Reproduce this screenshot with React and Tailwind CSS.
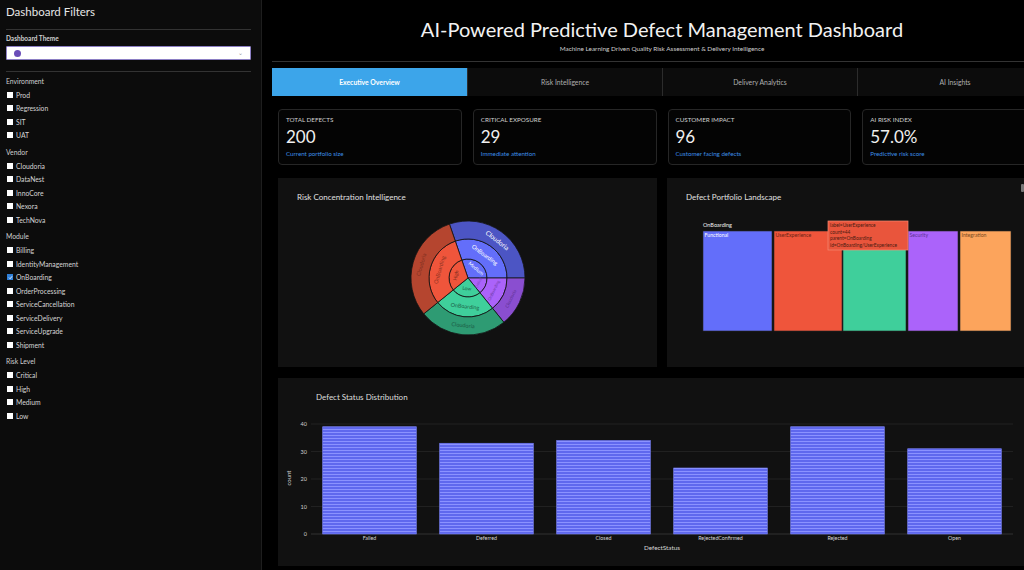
import React from 'react';

const FONT = { fontFamily: 'Lato, "Open Sans", sans-serif' };

const filterGroups = [
  { title: 'Environment', items: ['Prod', 'Regression', 'SIT', 'UAT'] },
  { title: 'Vendor', items: ['Cloudoria', 'DataNest', 'InnoCore', 'Nexora', 'TechNova'] },
  {
    title: 'Module',
    items: [
      'Billing',
      'IdentityManagement',
      'OnBoarding',
      'OrderProcessing',
      'ServiceCancellation',
      'ServiceDelivery',
      'ServiceUpgrade',
      'Shipment',
    ],
  },
  { title: 'Risk Level', items: ['Critical', 'High', 'Medium', 'Low'] },
];

const checked = ['OnBoarding'];

const tabs = ['Executive Overview', 'Risk Intelligence', 'Delivery Analytics', 'AI Insights'];

const kpis = [
  { label: 'TOTAL DEFECTS', value: '200', note: 'Current portfolio size' },
  { label: 'CRITICAL EXPOSURE', value: '29', note: 'Immediate attention' },
  { label: 'CUSTOMER IMPACT', value: '96', note: 'Customer facing defects' },
  { label: 'AI RISK INDEX', value: '57.0%', note: 'Predictive risk score' },
];

const statusCounts = [
  { status: 'Failed', count: 39 },
  { status: 'Deferred', count: 33 },
  { status: 'Closed', count: 34 },
  { status: 'RejectedConfirmed', count: 24 },
  { status: 'Rejected', count: 39 },
  { status: 'Open', count: 31 },
];

function Checkbox({ on }) {
  if (on) {
    return (
      <span className="w-[6px] h-[6px] bg-[#2f7fd8] flex items-center justify-center">
        <svg width="5" height="5" viewBox="0 0 10 10">
          <path d="M2 5.2 L4.2 7.4 L8.2 2.6" stroke="#fff" strokeWidth="1.8" fill="none" />
        </svg>
      </span>
    );
  }
  return <span className="w-[6px] h-[6px] bg-white" />;
}

function Sidebar() {
  return (
    <aside className="w-[262px] h-[570px] shrink-0 bg-[#0c0c0c] border-r border-[#1e1e1e] px-[6px] text-[#d2d2d2]">
      <div className="h-[24px] flex items-center text-[11.5px] text-[#e6e6e6]">Dashboard Filters</div>
      <div className="mt-[5px] border-t border-[#333] w-[245px]" />
      <div className="mt-[4px] h-[10px] flex items-center text-[6.5px] font-bold text-[#cfcfcf]">Dashboard Theme</div>
      <div className="mt-[2px] w-[245px] h-[14px] bg-white border border-[#8c7fc4] rounded-[1px] flex items-center justify-between px-[7px]">
        <span className="w-[7px] h-[7px] rounded-full bg-[#6a4db8]" />
        <span className="text-[6px] text-[#999] leading-none">⌄</span>
      </div>
      <div className="mt-[11px] border-t border-[#333] w-[245px]" />
      <div className="mt-[2px]">
        {filterGroups.map((g) => (
          <div key={g.title} className="mb-[3px]">
            <div className="h-[14px] flex items-center text-[6.8px] text-[#cfcfcf]">{g.title}</div>
            {g.items.map((it) => (
              <div key={it} className="h-[13.5px] flex items-center gap-[3px] pl-[1px] text-[6.8px] text-[#d4d4d4]">
                <Checkbox on={checked.includes(it)} />
                <span>{it}</span>
              </div>
            ))}
          </div>
        ))}
      </div>
    </aside>
  );
}

// annular sector between radii r0..r1, angles measured clockwise from 12 o'clock
function arcPath(cx, cy, r0, r1, a0, a1) {
  const p = (r, a) => {
    const t = ((a - 90) * Math.PI) / 180;
    return [cx + r * Math.cos(t), cy + r * Math.sin(t)];
  };
  const large = a1 - a0 > 180 ? 1 : 0;
  const [x1, y1] = p(r1, a0);
  const [x2, y2] = p(r1, a1);
  const [x3, y3] = p(r0, a1);
  const [x4, y4] = p(r0, a0);
  if (r0 === 0) {
    return `M${cx},${cy} L${x1},${y1} A${r1},${r1} 0 ${large} 1 ${x2},${y2} Z`;
  }
  return `M${x1},${y1} A${r1},${r1} 0 ${large} 1 ${x2},${y2} L${x3},${y3} A${r0},${r0} 0 ${large} 0 ${x4},${y4} Z`;
}

const sunSlices = [
  { risk: 'Medium', a0: -19, a1: 90, inner: '#636efa', outer: '#4c55c4' },
  { risk: 'Critical', a0: 90, a1: 141, inner: '#ab63fa', outer: '#8a4ed0' },
  { risk: 'Low', a0: 141, a1: 231, inner: '#3fcf9b', outer: '#2e9b73' },
  { risk: 'High', a0: 231, a1: 341, inner: '#ef553b', outer: '#b5452f' },
];

function SunLabel({ cx, cy, r, a, text, size, fill }) {
  const t = ((a - 90) * Math.PI) / 180;
  const x = cx + r * Math.cos(t);
  const y = cy + r * Math.sin(t);
  let rot = a > 180 ? a - 360 : a;
  if (rot > 90) rot -= 180;
  if (rot < -90) rot += 180;
  return (
    <text
      x={x}
      y={y}
      fontSize={size}
      fill={fill}
      textAnchor="middle"
      dominantBaseline="middle"
      transform={`rotate(${rot} ${x} ${y})`}
    >
      {text}
    </text>
  );
}

function Sunburst() {
  const c = 60;
  return (
    <svg width="120" height="120" viewBox="0 0 120 120" style={FONT}>
      {sunSlices.map((s) => (
        <g key={s.risk} stroke="#141414" strokeWidth="0.8">
          <path d={arcPath(c, c, 0, 19, s.a0, s.a1)} fill={s.inner} />
          <path d={arcPath(c, c, 19, 39, s.a0, s.a1)} fill={s.inner} />
          <path d={arcPath(c, c, 39, 57, s.a0, s.a1)} fill={s.outer} />
        </g>
      ))}
      <SunLabel cx={c} cy={c} r={47} a={38} text="Cloudoria" size={6.5} fill="#fff" />
      <SunLabel cx={c} cy={c} r={28} a={36} text="OnBoarding" size={5.8} fill="#fff" />
      <SunLabel cx={c} cy={c} r={12} a={40} text="Medium" size={5} fill="#fff" />
      <SunLabel cx={c} cy={c} r={12} a={282} text="High" size={5} fill="#7a2a1c" />
      <SunLabel cx={c} cy={c} r={29} a={286} text="OnBoarding" size={5.5} fill="#8a3222" />
      <SunLabel cx={c} cy={c} r={48} a={286} text="Cloudoria" size={5.5} fill="#7d2e20" />
      <SunLabel cx={c} cy={c} r={11} a={186} text="Low" size={5} fill="#1d5e46" />
      <SunLabel cx={c} cy={c} r={29} a={186} text="OnBoarding" size={5.5} fill="#1d6248" />
      <SunLabel cx={c} cy={c} r={48} a={186} text="Cloudoria" size={5.5} fill="#1c5a43" />
      <SunLabel cx={c} cy={c} r={12} a={115} text="Critical" size={3.8} fill="#7a46b8" />
      <SunLabel cx={c} cy={c} r={29} a={116} text="OnBoarding" size={4.2} fill="#6c3aa6" />
      <SunLabel cx={c} cy={c} r={48} a={116} text="Cloudoria" size={4.6} fill="#5e3294" />
    </svg>
  );
}

// Performance tile's label sits under the hover box, so it is left blank
const treeRects = [
  { name: 'Functional', x: 36, w: 69, fill: '#636efa', text: '#ffffff' },
  { name: 'UserExperience', x: 107, w: 68, fill: '#ef553b', text: '#6b2416' },
  { name: '', x: 176, w: 63, fill: '#3fcf9b', text: '#1d6248' },
  { name: 'Security', x: 241, w: 50, fill: '#ab63fa', text: '#5e3294' },
  { name: 'Integration', x: 293, w: 51, fill: '#fca45c', text: '#7a4a22' },
];

function Treemap() {
  return (
    <svg width="379" height="189" viewBox="0 0 379 189" style={FONT}>
      <text x="19" y="22" fontSize="8" fill="#e0e0e0">Defect Portfolio Landscape</text>
      <text x="36" y="49" fontSize="5.5" fill="#f0f0f0">OnBoarding</text>
      {treeRects.map((r) => (
        <g key={r.x}>
          <rect x={r.x} y="53" width={r.w} height="100" fill={r.fill} stroke="#2a2a2a" strokeWidth="0.6" />
          {r.name && <text x={r.x + 1.5} y="59" fontSize="5.2" fill={r.text}>{r.name}</text>}
        </g>
      ))}
      {/* hover label */}
      <rect x="161" y="43" width="80" height="29" fill="#e9553c" stroke="#f58a72" strokeWidth="0.7" />
      <g fontSize="4.8" fill="#4a1c12">
        <text x="163" y="49">label=UserExperience</text>
        <text x="163" y="55.5">count=44</text>
        <text x="163" y="62">parent=OnBoarding</text>
        <text x="163" y="68.5">id=OnBoarding/UserExperience</text>
      </g>
      <rect x="354" y="6" width="3" height="8" rx="1" fill="#777" />
    </svg>
  );
}

function BarChart() {
  const x0 = 33;
  const band = 117;
  const yZero = 156;
  const scale = 2.75;
  const ticks = [0, 10, 20, 30, 40];
  return (
    <svg width="768" height="188" viewBox="0 0 768 188" style={FONT}>
      <defs>
        <pattern id="stripes" width="4" height="3" patternUnits="userSpaceOnUse">
          <rect width="4" height="3" fill="#5f68ee" />
          <rect width="4" height="1" fill="#8b92ff" />
        </pattern>
      </defs>
      <text x="38" y="22" fontSize="8" fill="#dedede">Defect Status Distribution</text>
      {ticks.map((t) => (
        <g key={t}>
          <line x1={x0} x2={735} y1={yZero - t * scale} y2={yZero - t * scale} stroke={t === 0 ? '#3a3a3a' : '#262626'} strokeWidth="0.8" />
          <text x="29" y={yZero - t * scale + 2} fontSize="5.5" fill="#cfcfcf" textAnchor="end">{t}</text>
        </g>
      ))}
      <text x="13" y="100" fontSize="6" fill="#d0d0d0" textAnchor="middle" transform="rotate(-90 13 100)">count</text>
      {statusCounts.map((d, i) => {
        const bx = x0 + i * band + 11.7;
        const h = d.count * scale;
        return (
          <g key={d.status}>
            <rect x={bx} y={yZero - h} width="93.6" height={h} fill="url(#stripes)" stroke="#7d85ff" strokeWidth="0.6" />
            <text x={bx + 46.8} y="162" fontSize="5.3" fill="#d6d6d6" textAnchor="middle">{d.status}</text>
          </g>
        );
      })}
      <text x="384" y="172" fontSize="6.3" fill="#d6d6d6" textAnchor="middle">DefectStatus</text>
    </svg>
  );
}

export default function App() {
  return (
    <div className="w-[1024px] h-[570px] overflow-hidden flex bg-black" style={FONT}>
      <Sidebar />
      <main className="flex-1 overflow-hidden pl-[10px]">
        <div className="w-[780px]">
          <div className="pt-[17px] flex flex-col items-center text-center">
            <h1 className="text-[20px] leading-[24px] text-[#f2f2f2]">
              AI-Powered Predictive Defect Management Dashboard
            </h1>
            <p className="mt-[3px] h-[9px] leading-[9px] text-[6.4px] text-[#cfcfcf]">
              Machine Learning Driven Quality Risk Assessment &amp; Delivery Intelligence
            </p>
          </div>
          <div className="mt-[8px] border-t border-[#333]" />

          <div className="mt-[6px] grid grid-cols-4 h-[28px]">
            {tabs.map((t, i) => (
              <div
                key={t}
                className={
                  i === 0
                    ? 'flex items-center justify-center bg-[#3ca5ea] text-white text-[6.8px] font-bold'
                    : 'flex items-center justify-center bg-[#0c0c0c] border-l border-[#2c2c2c] text-[#b0b0b0] text-[6.8px]'
                }
              >
                {t}
              </div>
            ))}
          </div>

          <div className="px-[6px]">
            <div className="mt-[13px] grid grid-cols-4 gap-[11px]">
              {kpis.map((k) => (
                <div key={k.label} className="h-[56px] rounded-[4px] border border-[#262626] bg-[#040404] px-[7px] pt-[5px]">
                  <div className="text-[6.3px] leading-[9px] text-[#d0d0d0]">{k.label}</div>
                  <div className="mt-[2px] text-[17px] leading-[22px] text-[#f0f0f0]">{k.value}</div>
                  <div className="mt-[1px] text-[6.2px] leading-[9px] text-[#3d8fe6]">{k.note}</div>
                </div>
              ))}
            </div>

            <div className="mt-[13px] flex gap-[10px]">
              <section className="w-[379px] h-[189px] bg-[#111] flex flex-col">
                <h2 className="pl-[19px] pt-[14px] text-[8px] leading-[10px] text-[#e0e0e0]">Risk Concentration Intelligence</h2>
                <div className="mt-[16px] flex justify-center">
                  <Sunburst />
                </div>
              </section>
              <section className="w-[379px] h-[189px] bg-[#111]">
                <Treemap />
              </section>
            </div>

            <section className="mt-[11px] w-[768px] h-[188px] bg-[#111]">
              <BarChart />
            </section>
          </div>
        </div>
      </main>
    </div>
  );
}
